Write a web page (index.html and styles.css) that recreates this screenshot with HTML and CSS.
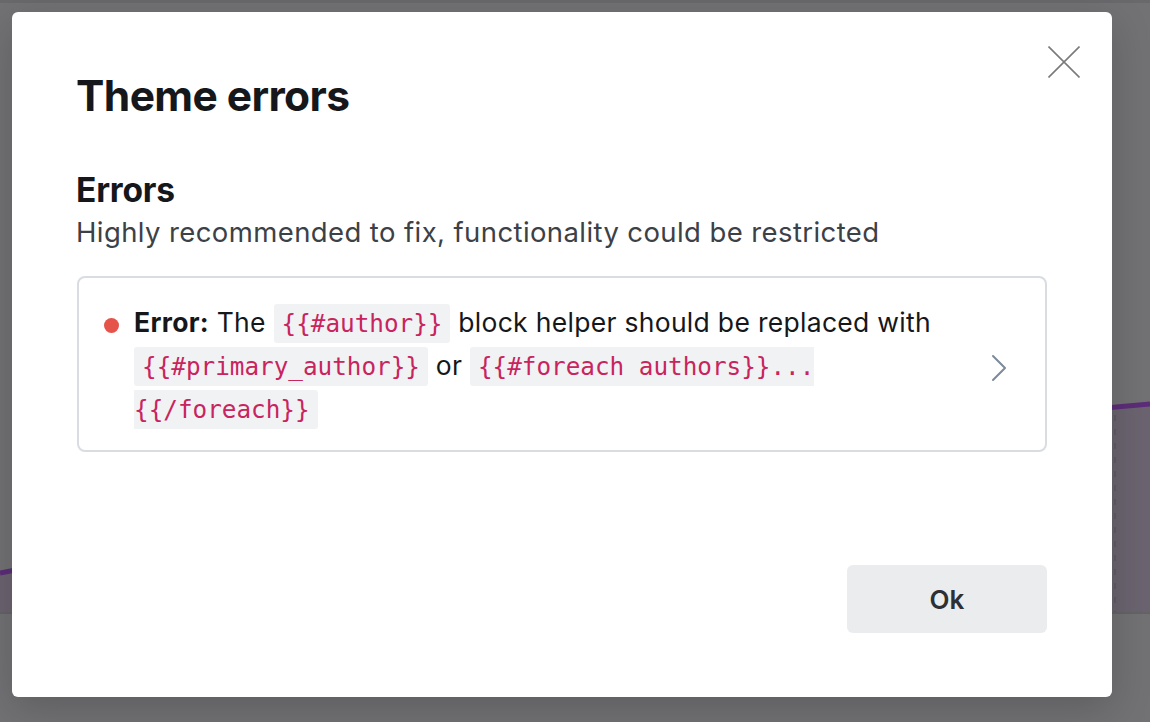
FILE: index.html
```html
<!DOCTYPE html>
<html lang="en">
<head>
<meta charset="utf-8">
<title>Theme errors</title>
<link rel="stylesheet" href="styles.css">
</head>
<body>
<div class="backdrop">
  <svg class="chart" width="1150" height="722" viewBox="0 0 1150 722" preserveAspectRatio="none">
    <rect x="0" y="0" width="1150" height="3" fill="#69696b"/>
    <path d="M0 573 C 200 536, 900 424, 1150 404 L1150 613 L0 613 Z" fill="#6b6470"/>
    <path d="M0 573 C 200 536, 900 424, 1150 404" fill="none" stroke="#5c2d78" stroke-width="5"/>
    <line x1="1115" y1="415" x2="1115" y2="612" stroke="#5e5c63" stroke-width="2" stroke-dasharray="6 8"/>
    <rect x="0" y="612" width="1150" height="2" fill="#646466"/>
  </svg>
</div>

<div class="modal" role="dialog">
  <button class="close" aria-label="Close">
    <svg width="32" height="32" viewBox="0 0 32 32"><path d="M0.5 0.5 L31.5 31.5 M31.5 0.5 L0.5 31.5" stroke="#7b7b7d" stroke-width="1.6" fill="none"/></svg>
  </button>
  <h1 class="title">Theme errors</h1>
  <section class="section">
    <h2 class="section-title">Errors</h2>
    <p class="section-sub">Highly recommended to fix, functionality could be restricted</p>
    <div class="error-box">
      <span class="dot"></span>
      <p class="error-text"><strong>Error:</strong> The <code>{{#author}}</code> block helper should be replaced with <code>{{#primary_author}}</code> or <code>{{#foreach authors}}... {{/foreach}}</code></p>
      <svg class="chevron" width="16" height="28" viewBox="0 0 16 28"><path d="M2 2 L14 14 L2 26" stroke="#7d8a99" stroke-width="2" fill="none" stroke-linecap="round" stroke-linejoin="round"/></svg>
    </div>
  </section>
  <div class="footer">
    <button class="ok">Ok</button>
  </div>
</div>
</body>
</html>
```

FILE: styles.css
```css
* { box-sizing: border-box; }
html, body { margin: 0; padding: 0; }
body {
  width: 1150px;
  height: 722px;
  background: #727274;
  font-family: Inter, "Noto Sans", sans-serif;
  overflow: hidden;
  position: relative;
}
.backdrop {
  position: absolute;
  inset: 0;
}
.chart { display: block; }

.modal {
  position: absolute;
  left: 12px;
  top: 12px;
  width: 1100px;
  height: 685px;
  background: #fff;
  border-radius: 6px;
  box-shadow: 0 12px 40px rgba(0,0,0,0.18);
  padding: 58px 65px 64px 64px;
  display: flex;
  flex-direction: column;
}
.close {
  position: absolute;
  right: 32px;
  top: 34px;
  width: 32px;
  height: 32px;
  border: 0;
  background: none;
  padding: 0;
  cursor: pointer;
}
.close svg { display: block; }
.title {
  margin: 0;
  font-size: 42.5px;
  line-height: 52px;
  font-weight: 700;
  letter-spacing: -0.6px;
  color: #15171a;
}
.section { margin-top: 48px; }
.section-title {
  margin: 0;
  font-size: 33.5px;
  line-height: 40px;
  font-weight: 700;
  letter-spacing: -0.2px;
  color: #15171a;
}
.section-sub {
  margin: 4px 0 0;
  font-size: 27.5px;
  line-height: 36px;
  letter-spacing: 0.4px;
  color: #3c4147;
}
.error-box {
  margin-top: 26px;
  margin-left: 1px;
  border: 2px solid #d9dde1;
  border-radius: 8px;
  padding: 23px 38px 20px 25px;
  display: flex;
  align-items: center;
}
.dot {
  align-self: flex-start;
  flex: none;
  width: 15px;
  height: 15px;
  border-radius: 50%;
  background: #e5534b;
  margin-top: 17px;
  margin-right: 15px;
}
.error-text {
  flex: 1;
  margin: 0;
  font-size: 26.5px;
  line-height: 43px;
  letter-spacing: 0.3px;
  color: #15171a;
  padding-right: 36px;
}
.error-text strong { font-weight: 700; }
.error-text code {
  font-family: "DejaVu Sans Mono", monospace;
  font-size: 24.3px;
  line-height: 1;
  letter-spacing: 0;
  color: #c8245e;
  background: #f1f2f4;
  border-radius: 3px;
  padding: 5px 8px;
  -webkit-box-decoration-break: slice;
  box-decoration-break: slice;
}
.chevron { flex: none; margin-top: 4px; }

.footer {
  margin-top: auto;
  display: flex;
  justify-content: flex-end;
}
.ok {
  width: 200px;
  height: 68px;
  border: 0;
  border-radius: 6px;
  background: #ebecee;
  font-family: Inter, "Noto Sans", sans-serif;
  font-size: 26px;
  font-weight: 600;
  color: #2d3035;
}
```
